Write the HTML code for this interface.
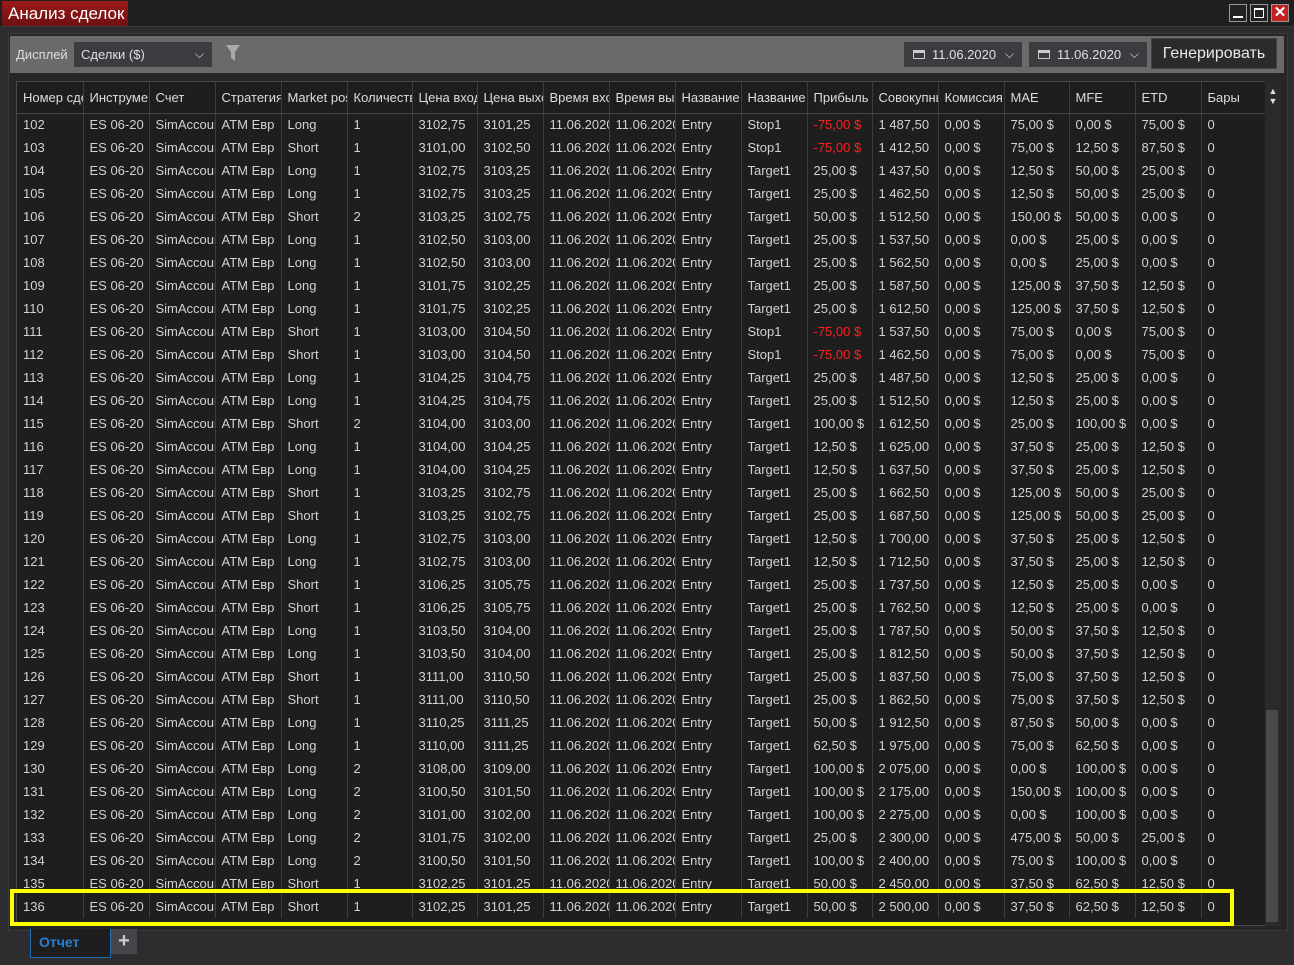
<!DOCTYPE html>
<html><head><meta charset="utf-8">
<style>
*{margin:0;padding:0;box-sizing:border-box}
body{width:1294px;height:965px;background:#2d2d30;font-family:"Liberation Sans",sans-serif;color:#d4d4d4;position:relative;overflow:hidden}
.title{position:absolute;left:0;top:0;width:1294px;height:27px;background:#1f1f1f;border-bottom:1px solid #3a3a3a}
.title .t{position:absolute;left:2px;top:1px;height:25px;width:126px;background:linear-gradient(#9a1a1a,#6e1010);color:#fff;font-size:17px;line-height:25px;padding-left:6px}
.wb{position:absolute;top:4px;width:18px;height:18px;border:1px solid #999;background:#222}
.main{position:absolute;left:8px;top:33px;width:1280px;height:898px;background:#262626;border:1px solid #3a3a3a}
.tool{position:absolute;left:10px;top:36px;width:1274px;height:37px;background:#6a6a6a}
.lbl{position:absolute;left:6px;top:11px;font-size:13px;color:#ddd}
.dd{position:absolute;background:#3b3b40;color:#e0e0e0;font-size:13px;height:25px;line-height:25px}
.chev{position:absolute;right:8px;top:0;font-size:12px}
.gen{position:absolute;right:7px;top:2px;width:126px;height:31px;background:#2b2b2e;border:1px solid #444;color:#e8e8e8;font-size:16px;line-height:29px;text-align:center}
.grid{position:absolute;left:16px;top:81px;width:1265px;height:845px;background:#1e1e1e;border:1px solid #474747;overflow:hidden}
table{border-collapse:collapse;table-layout:fixed;position:absolute;left:0;top:0;width:1249px}
td,th{height:23px;font-size:13px;font-weight:normal;text-align:left;padding-left:6px;white-space:nowrap;overflow:hidden;border-left:1px solid #3c3c3c;color:#d2d2d2}
th{height:31px;border-bottom:1px solid #474747;color:#ddd}
td:first-child,th:first-child{border-left:none}
.r{color:#ff2020}
.sb{position:absolute;left:1265px;top:81px;width:16px;height:845px;background:#2a2a2a}
.thumb{position:absolute;left:1266px;top:710px;width:12px;height:212px;background:#4a4a4a}
.hl{position:absolute;left:10px;top:889px;width:1224px;height:37px;border:4px solid #ffff00}
.tab{position:absolute;left:30px;top:929px;width:81px;height:29px;background:#1e1e1e;border:1px solid #1e6fb8;border-top:none;color:#2a7fd0;font-size:14px;font-weight:bold;padding-left:8px;line-height:26px}
.plus{position:absolute;left:111px;top:929px;width:26px;height:25px;background:#46464a;color:#ccc;font-size:20px;text-align:center;line-height:24px;font-weight:bold}
</style></head><body>
<div class="title"><div class="t">Анализ сделок</div>
<div class="wb" style="left:1229px"><div style="position:absolute;left:3px;bottom:3px;width:10px;height:2px;background:#fff"></div></div>
<div class="wb" style="left:1250px"><div style="position:absolute;left:3px;top:3px;width:10px;height:10px;border:1px solid #fff;border-top-width:2px"></div></div>
<div class="wb" style="left:1271px;background:#c42020;color:#fff;font-size:15px;font-weight:bold;text-align:center;line-height:16px">✕</div>
</div>
<div class="main"></div>
<div class="tool">
<div class="lbl">Дисплей</div>
<div class="dd" style="left:64px;top:6px;width:138px;padding-left:7px">Сделки ($)<span class="chev">&#x2335;</span></div>
<svg style="position:absolute;left:215px;top:8px" width="16" height="18"><path d="M1 1 H15 L10 8 V17 L6 14 V8 Z" fill="#aaa"/></svg>
<div class="dd" style="left:894px;top:6px;width:118px;padding-left:28px">11.06.2020<span class="chev">&#x2335;</span><span style="position:absolute;left:9px;top:8px;width:12px;height:9px;border:1px solid #ccc;border-top-width:3px"></span></div>
<div class="dd" style="left:1019px;top:6px;width:118px;padding-left:28px">11.06.2020<span class="chev">&#x2335;</span><span style="position:absolute;left:9px;top:8px;width:12px;height:9px;border:1px solid #ccc;border-top-width:3px"></span></div>
<div class="gen">Генерировать</div>
</div>
<div class="grid">
<table>
<colgroup><col style="width:66px"><col style="width:66px"><col style="width:66px"><col style="width:66px"><col style="width:66px"><col style="width:65px"><col style="width:65px"><col style="width:66px"><col style="width:66px"><col style="width:66px"><col style="width:66px"><col style="width:66px"><col style="width:65px"><col style="width:66px"><col style="width:66px"><col style="width:65px"><col style="width:66px"><col style="width:66px"><col style="width:65px"></colgroup>
<tr><th>Номер сделки</th><th>Инструмент</th><th>Счет</th><th>Стратегия</th><th>Market pos.</th><th>Количество</th><th>Цена входа</th><th>Цена выхода</th><th>Время входа</th><th>Время выхода</th><th>Название</th><th>Название</th><th>Прибыль</th><th>Совокупный</th><th>Комиссия</th><th>MAE</th><th>MFE</th><th>ETD</th><th>Бары</th></tr>
<tr><td>102</td><td>ES 06-20</td><td>SimAccount</td><td>ATM Евр</td><td>Long</td><td>1</td><td>3102,75</td><td>3101,25</td><td>11.06.2020</td><td>11.06.2020</td><td>Entry</td><td>Stop1</td><td class="r">-75,00 $</td><td>1 487,50</td><td>0,00 $</td><td>75,00 $</td><td>0,00 $</td><td>75,00 $</td><td>0</td></tr>
<tr><td>103</td><td>ES 06-20</td><td>SimAccount</td><td>ATM Евр</td><td>Short</td><td>1</td><td>3101,00</td><td>3102,50</td><td>11.06.2020</td><td>11.06.2020</td><td>Entry</td><td>Stop1</td><td class="r">-75,00 $</td><td>1 412,50</td><td>0,00 $</td><td>75,00 $</td><td>12,50 $</td><td>87,50 $</td><td>0</td></tr>
<tr><td>104</td><td>ES 06-20</td><td>SimAccount</td><td>ATM Евр</td><td>Long</td><td>1</td><td>3102,75</td><td>3103,25</td><td>11.06.2020</td><td>11.06.2020</td><td>Entry</td><td>Target1</td><td>25,00 $</td><td>1 437,50</td><td>0,00 $</td><td>12,50 $</td><td>50,00 $</td><td>25,00 $</td><td>0</td></tr>
<tr><td>105</td><td>ES 06-20</td><td>SimAccount</td><td>ATM Евр</td><td>Long</td><td>1</td><td>3102,75</td><td>3103,25</td><td>11.06.2020</td><td>11.06.2020</td><td>Entry</td><td>Target1</td><td>25,00 $</td><td>1 462,50</td><td>0,00 $</td><td>12,50 $</td><td>50,00 $</td><td>25,00 $</td><td>0</td></tr>
<tr><td>106</td><td>ES 06-20</td><td>SimAccount</td><td>ATM Евр</td><td>Short</td><td>2</td><td>3103,25</td><td>3102,75</td><td>11.06.2020</td><td>11.06.2020</td><td>Entry</td><td>Target1</td><td>50,00 $</td><td>1 512,50</td><td>0,00 $</td><td>150,00 $</td><td>50,00 $</td><td>0,00 $</td><td>0</td></tr>
<tr><td>107</td><td>ES 06-20</td><td>SimAccount</td><td>ATM Евр</td><td>Long</td><td>1</td><td>3102,50</td><td>3103,00</td><td>11.06.2020</td><td>11.06.2020</td><td>Entry</td><td>Target1</td><td>25,00 $</td><td>1 537,50</td><td>0,00 $</td><td>0,00 $</td><td>25,00 $</td><td>0,00 $</td><td>0</td></tr>
<tr><td>108</td><td>ES 06-20</td><td>SimAccount</td><td>ATM Евр</td><td>Long</td><td>1</td><td>3102,50</td><td>3103,00</td><td>11.06.2020</td><td>11.06.2020</td><td>Entry</td><td>Target1</td><td>25,00 $</td><td>1 562,50</td><td>0,00 $</td><td>0,00 $</td><td>25,00 $</td><td>0,00 $</td><td>0</td></tr>
<tr><td>109</td><td>ES 06-20</td><td>SimAccount</td><td>ATM Евр</td><td>Long</td><td>1</td><td>3101,75</td><td>3102,25</td><td>11.06.2020</td><td>11.06.2020</td><td>Entry</td><td>Target1</td><td>25,00 $</td><td>1 587,50</td><td>0,00 $</td><td>125,00 $</td><td>37,50 $</td><td>12,50 $</td><td>0</td></tr>
<tr><td>110</td><td>ES 06-20</td><td>SimAccount</td><td>ATM Евр</td><td>Long</td><td>1</td><td>3101,75</td><td>3102,25</td><td>11.06.2020</td><td>11.06.2020</td><td>Entry</td><td>Target1</td><td>25,00 $</td><td>1 612,50</td><td>0,00 $</td><td>125,00 $</td><td>37,50 $</td><td>12,50 $</td><td>0</td></tr>
<tr><td>111</td><td>ES 06-20</td><td>SimAccount</td><td>ATM Евр</td><td>Short</td><td>1</td><td>3103,00</td><td>3104,50</td><td>11.06.2020</td><td>11.06.2020</td><td>Entry</td><td>Stop1</td><td class="r">-75,00 $</td><td>1 537,50</td><td>0,00 $</td><td>75,00 $</td><td>0,00 $</td><td>75,00 $</td><td>0</td></tr>
<tr><td>112</td><td>ES 06-20</td><td>SimAccount</td><td>ATM Евр</td><td>Short</td><td>1</td><td>3103,00</td><td>3104,50</td><td>11.06.2020</td><td>11.06.2020</td><td>Entry</td><td>Stop1</td><td class="r">-75,00 $</td><td>1 462,50</td><td>0,00 $</td><td>75,00 $</td><td>0,00 $</td><td>75,00 $</td><td>0</td></tr>
<tr><td>113</td><td>ES 06-20</td><td>SimAccount</td><td>ATM Евр</td><td>Long</td><td>1</td><td>3104,25</td><td>3104,75</td><td>11.06.2020</td><td>11.06.2020</td><td>Entry</td><td>Target1</td><td>25,00 $</td><td>1 487,50</td><td>0,00 $</td><td>12,50 $</td><td>25,00 $</td><td>0,00 $</td><td>0</td></tr>
<tr><td>114</td><td>ES 06-20</td><td>SimAccount</td><td>ATM Евр</td><td>Long</td><td>1</td><td>3104,25</td><td>3104,75</td><td>11.06.2020</td><td>11.06.2020</td><td>Entry</td><td>Target1</td><td>25,00 $</td><td>1 512,50</td><td>0,00 $</td><td>12,50 $</td><td>25,00 $</td><td>0,00 $</td><td>0</td></tr>
<tr><td>115</td><td>ES 06-20</td><td>SimAccount</td><td>ATM Евр</td><td>Short</td><td>2</td><td>3104,00</td><td>3103,00</td><td>11.06.2020</td><td>11.06.2020</td><td>Entry</td><td>Target1</td><td>100,00 $</td><td>1 612,50</td><td>0,00 $</td><td>25,00 $</td><td>100,00 $</td><td>0,00 $</td><td>0</td></tr>
<tr><td>116</td><td>ES 06-20</td><td>SimAccount</td><td>ATM Евр</td><td>Long</td><td>1</td><td>3104,00</td><td>3104,25</td><td>11.06.2020</td><td>11.06.2020</td><td>Entry</td><td>Target1</td><td>12,50 $</td><td>1 625,00</td><td>0,00 $</td><td>37,50 $</td><td>25,00 $</td><td>12,50 $</td><td>0</td></tr>
<tr><td>117</td><td>ES 06-20</td><td>SimAccount</td><td>ATM Евр</td><td>Long</td><td>1</td><td>3104,00</td><td>3104,25</td><td>11.06.2020</td><td>11.06.2020</td><td>Entry</td><td>Target1</td><td>12,50 $</td><td>1 637,50</td><td>0,00 $</td><td>37,50 $</td><td>25,00 $</td><td>12,50 $</td><td>0</td></tr>
<tr><td>118</td><td>ES 06-20</td><td>SimAccount</td><td>ATM Евр</td><td>Short</td><td>1</td><td>3103,25</td><td>3102,75</td><td>11.06.2020</td><td>11.06.2020</td><td>Entry</td><td>Target1</td><td>25,00 $</td><td>1 662,50</td><td>0,00 $</td><td>125,00 $</td><td>50,00 $</td><td>25,00 $</td><td>0</td></tr>
<tr><td>119</td><td>ES 06-20</td><td>SimAccount</td><td>ATM Евр</td><td>Short</td><td>1</td><td>3103,25</td><td>3102,75</td><td>11.06.2020</td><td>11.06.2020</td><td>Entry</td><td>Target1</td><td>25,00 $</td><td>1 687,50</td><td>0,00 $</td><td>125,00 $</td><td>50,00 $</td><td>25,00 $</td><td>0</td></tr>
<tr><td>120</td><td>ES 06-20</td><td>SimAccount</td><td>ATM Евр</td><td>Long</td><td>1</td><td>3102,75</td><td>3103,00</td><td>11.06.2020</td><td>11.06.2020</td><td>Entry</td><td>Target1</td><td>12,50 $</td><td>1 700,00</td><td>0,00 $</td><td>37,50 $</td><td>25,00 $</td><td>12,50 $</td><td>0</td></tr>
<tr><td>121</td><td>ES 06-20</td><td>SimAccount</td><td>ATM Евр</td><td>Long</td><td>1</td><td>3102,75</td><td>3103,00</td><td>11.06.2020</td><td>11.06.2020</td><td>Entry</td><td>Target1</td><td>12,50 $</td><td>1 712,50</td><td>0,00 $</td><td>37,50 $</td><td>25,00 $</td><td>12,50 $</td><td>0</td></tr>
<tr><td>122</td><td>ES 06-20</td><td>SimAccount</td><td>ATM Евр</td><td>Short</td><td>1</td><td>3106,25</td><td>3105,75</td><td>11.06.2020</td><td>11.06.2020</td><td>Entry</td><td>Target1</td><td>25,00 $</td><td>1 737,50</td><td>0,00 $</td><td>12,50 $</td><td>25,00 $</td><td>0,00 $</td><td>0</td></tr>
<tr><td>123</td><td>ES 06-20</td><td>SimAccount</td><td>ATM Евр</td><td>Short</td><td>1</td><td>3106,25</td><td>3105,75</td><td>11.06.2020</td><td>11.06.2020</td><td>Entry</td><td>Target1</td><td>25,00 $</td><td>1 762,50</td><td>0,00 $</td><td>12,50 $</td><td>25,00 $</td><td>0,00 $</td><td>0</td></tr>
<tr><td>124</td><td>ES 06-20</td><td>SimAccount</td><td>ATM Евр</td><td>Long</td><td>1</td><td>3103,50</td><td>3104,00</td><td>11.06.2020</td><td>11.06.2020</td><td>Entry</td><td>Target1</td><td>25,00 $</td><td>1 787,50</td><td>0,00 $</td><td>50,00 $</td><td>37,50 $</td><td>12,50 $</td><td>0</td></tr>
<tr><td>125</td><td>ES 06-20</td><td>SimAccount</td><td>ATM Евр</td><td>Long</td><td>1</td><td>3103,50</td><td>3104,00</td><td>11.06.2020</td><td>11.06.2020</td><td>Entry</td><td>Target1</td><td>25,00 $</td><td>1 812,50</td><td>0,00 $</td><td>50,00 $</td><td>37,50 $</td><td>12,50 $</td><td>0</td></tr>
<tr><td>126</td><td>ES 06-20</td><td>SimAccount</td><td>ATM Евр</td><td>Short</td><td>1</td><td>3111,00</td><td>3110,50</td><td>11.06.2020</td><td>11.06.2020</td><td>Entry</td><td>Target1</td><td>25,00 $</td><td>1 837,50</td><td>0,00 $</td><td>75,00 $</td><td>37,50 $</td><td>12,50 $</td><td>0</td></tr>
<tr><td>127</td><td>ES 06-20</td><td>SimAccount</td><td>ATM Евр</td><td>Short</td><td>1</td><td>3111,00</td><td>3110,50</td><td>11.06.2020</td><td>11.06.2020</td><td>Entry</td><td>Target1</td><td>25,00 $</td><td>1 862,50</td><td>0,00 $</td><td>75,00 $</td><td>37,50 $</td><td>12,50 $</td><td>0</td></tr>
<tr><td>128</td><td>ES 06-20</td><td>SimAccount</td><td>ATM Евр</td><td>Long</td><td>1</td><td>3110,25</td><td>3111,25</td><td>11.06.2020</td><td>11.06.2020</td><td>Entry</td><td>Target1</td><td>50,00 $</td><td>1 912,50</td><td>0,00 $</td><td>87,50 $</td><td>50,00 $</td><td>0,00 $</td><td>0</td></tr>
<tr><td>129</td><td>ES 06-20</td><td>SimAccount</td><td>ATM Евр</td><td>Long</td><td>1</td><td>3110,00</td><td>3111,25</td><td>11.06.2020</td><td>11.06.2020</td><td>Entry</td><td>Target1</td><td>62,50 $</td><td>1 975,00</td><td>0,00 $</td><td>75,00 $</td><td>62,50 $</td><td>0,00 $</td><td>0</td></tr>
<tr><td>130</td><td>ES 06-20</td><td>SimAccount</td><td>ATM Евр</td><td>Long</td><td>2</td><td>3108,00</td><td>3109,00</td><td>11.06.2020</td><td>11.06.2020</td><td>Entry</td><td>Target1</td><td>100,00 $</td><td>2 075,00</td><td>0,00 $</td><td>0,00 $</td><td>100,00 $</td><td>0,00 $</td><td>0</td></tr>
<tr><td>131</td><td>ES 06-20</td><td>SimAccount</td><td>ATM Евр</td><td>Long</td><td>2</td><td>3100,50</td><td>3101,50</td><td>11.06.2020</td><td>11.06.2020</td><td>Entry</td><td>Target1</td><td>100,00 $</td><td>2 175,00</td><td>0,00 $</td><td>150,00 $</td><td>100,00 $</td><td>0,00 $</td><td>0</td></tr>
<tr><td>132</td><td>ES 06-20</td><td>SimAccount</td><td>ATM Евр</td><td>Long</td><td>2</td><td>3101,00</td><td>3102,00</td><td>11.06.2020</td><td>11.06.2020</td><td>Entry</td><td>Target1</td><td>100,00 $</td><td>2 275,00</td><td>0,00 $</td><td>0,00 $</td><td>100,00 $</td><td>0,00 $</td><td>0</td></tr>
<tr><td>133</td><td>ES 06-20</td><td>SimAccount</td><td>ATM Евр</td><td>Long</td><td>2</td><td>3101,75</td><td>3102,00</td><td>11.06.2020</td><td>11.06.2020</td><td>Entry</td><td>Target1</td><td>25,00 $</td><td>2 300,00</td><td>0,00 $</td><td>475,00 $</td><td>50,00 $</td><td>25,00 $</td><td>0</td></tr>
<tr><td>134</td><td>ES 06-20</td><td>SimAccount</td><td>ATM Евр</td><td>Long</td><td>2</td><td>3100,50</td><td>3101,50</td><td>11.06.2020</td><td>11.06.2020</td><td>Entry</td><td>Target1</td><td>100,00 $</td><td>2 400,00</td><td>0,00 $</td><td>75,00 $</td><td>100,00 $</td><td>0,00 $</td><td>0</td></tr>
<tr><td>135</td><td>ES 06-20</td><td>SimAccount</td><td>ATM Евр</td><td>Short</td><td>1</td><td>3102,25</td><td>3101,25</td><td>11.06.2020</td><td>11.06.2020</td><td>Entry</td><td>Target1</td><td>50,00 $</td><td>2 450,00</td><td>0,00 $</td><td>37,50 $</td><td>62,50 $</td><td>12,50 $</td><td>0</td></tr>
<tr><td>136</td><td>ES 06-20</td><td>SimAccount</td><td>ATM Евр</td><td>Short</td><td>1</td><td>3102,25</td><td>3101,25</td><td>11.06.2020</td><td>11.06.2020</td><td>Entry</td><td>Target1</td><td>50,00 $</td><td>2 500,00</td><td>0,00 $</td><td>37,50 $</td><td>62,50 $</td><td>12,50 $</td><td>0</td></tr>
</table>
</div>
<div class="sb"><div style="color:#ddd;font-size:9px;text-align:center;line-height:10px;margin-top:5px">▲<br>▼</div></div>
<div class="thumb"></div>
<div class="hl"></div>
<div class="tab">Отчет</div>
<div class="plus">+</div>
</body></html>
